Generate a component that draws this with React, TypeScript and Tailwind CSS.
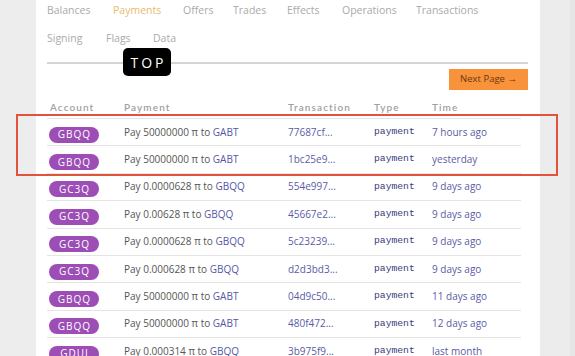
import React from "react";

interface PaymentRow {
  account: string;
  amount: string;
  to: string;
  tx: string;
  time: string;
}

const tabsTop = [
  { label: "Balances", w: "w-[66px]" },
  { label: "Payments", w: "w-[70px]" },
  { label: "Offers", w: "w-[50px]" },
  { label: "Trades", w: "w-[54px]" },
  { label: "Effects", w: "w-[55px]" },
  { label: "Operations", w: "w-[74px]" },
  { label: "Transactions", w: "" },
];
const tabsBottom = [
  { label: "Signing", w: "w-[59px]" },
  { label: "Flags", w: "w-[47px]" },
  { label: "Data", w: "" },
];

const rows: PaymentRow[] = [
  { account: "GBQQ", amount: "50000000", to: "GABT", tx: "77687cf...", time: "7 hours ago" },
  { account: "GBQQ", amount: "50000000", to: "GABT", tx: "1bc25e9...", time: "yesterday" },
  { account: "GC3Q", amount: "0.0000628", to: "GBQQ", tx: "554e997...", time: "9 days ago" },
  { account: "GC3Q", amount: "0.00628", to: "GBQQ", tx: "45667e2...", time: "9 days ago" },
  { account: "GC3Q", amount: "0.0000628", to: "GBQQ", tx: "5c23239...", time: "9 days ago" },
  { account: "GC3Q", amount: "0.000628", to: "GBQQ", tx: "d2d3bd3...", time: "9 days ago" },
  { account: "GBQQ", amount: "50000000", to: "GABT", tx: "04d9c50...", time: "11 days ago" },
  { account: "GBQQ", amount: "50000000", to: "GABT", tx: "480f472...", time: "12 days ago" },
  { account: "GDUI", amount: "0.000314", to: "GBQQ", tx: "3b975f9...", time: "last month" },
];

const cols = "grid grid-cols-[77px_164px_86px_58px_1fr] items-center";

const App: React.FC = () => {
  return (
    <div className="relative flex h-[356px] w-[575px] overflow-hidden bg-[#ececec] font-['Open_Sans',sans-serif]">
      <div className="w-[36px] shrink-0 bg-[#ededed]" />

      {/* main panel */}
      <div className="w-[504px] shrink-0 bg-white pl-[11px] pr-[12px]">
        <div className="-mt-[4px] flex text-[10.5px] leading-[28px] text-[#aaaaaa]">
          {tabsTop.map((t) => (
            <span key={t.label} className={`${t.w} shrink-0 ${t.label === "Payments" ? "text-[#e8bd6e]" : ""}`}>
              {t.label}
            </span>
          ))}
        </div>
        <div className="flex text-[10.5px] leading-[28px] text-[#aaaaaa]">
          {tabsBottom.map((t) => (
            <span key={t.label} className={`${t.w} shrink-0`}>
              {t.label}
            </span>
          ))}
        </div>

        <div className="mt-[10px] h-[2px] bg-[#d4d4d4]" />

        <div className="mt-[5px] flex justify-end">
          <button className="h-[21px] w-[79px] bg-[#f8923b] text-[9.5px] text-[#6e3810]">
            Next Page →
          </button>
        </div>

        <div className="w-[474px]">
          <div className={`${cols} h-[28px] pt-[6px] font-['Lato',sans-serif] text-[10px] font-semibold tracking-[1.1px] text-[#a0a0a0]`}>
            <span className="pl-[3px]">Account</span>
            <span>Payment</span>
            <span>Transaction</span>
            <span>Type</span>
            <span>Time</span>
          </div>

          {rows.map((r, i) => (
            <div key={i} className={`${cols} h-[27.4px] border-t border-[#e4e4e4]`}>
              <span className="pl-[2px]">
                <span className="inline-flex h-[16px] w-[50px] items-center justify-center rounded-full bg-[#9c4db6] pl-[1px] text-[10px] font-medium tracking-[1px] text-white">
                  {r.account}
                </span>
              </span>
              <span className="text-[10px] text-[#555555]">
                Pay {r.amount} π to <span className="text-[#5456a6]">{r.to}</span>
              </span>
              <span className="text-[10px] text-[#5a5ca6]">{r.tx}</span>
              <span className="font-['Liberation_Mono',monospace] text-[9.7px] text-[#3a3a7c]">payment</span>
              <span className="text-[10px] text-[#5a5ca6]">{r.time}</span>
            </div>
          ))}
        </div>
      </div>

      <div className="w-[30px] shrink-0 bg-[#ececec]" />
      <div className="flex-1 bg-[#e6e6e6]" />

      {/* floating TOP button */}
      <div className="absolute left-[123px] top-[48px] flex h-[28px] w-[48px] items-center justify-center rounded-[5px] bg-black pl-[3px] text-[14px] tracking-[3px] text-white">
        TOP
      </div>

      {/* annotation box */}
      <div className="pointer-events-none absolute left-[16px] top-[114px] h-[62px] w-[542px] border-2 border-[#e2533d]" />
    </div>
  );
};

export default App;
